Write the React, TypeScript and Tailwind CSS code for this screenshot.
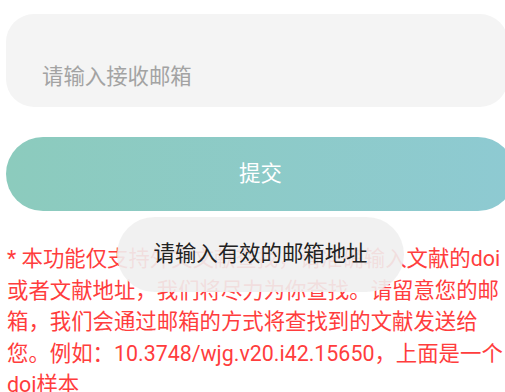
import React from "react";

export default function App() {
  const font = { fontFamily: 'Roboto, "Noto Sans CJK SC", sans-serif' };
  return (
    <div className="relative h-[392px] w-[505px] overflow-hidden bg-white" style={font}>
      <div className="pt-[14px] pl-[6px]">
        <div className="h-[93px] w-[502px] rounded-[28px] bg-[#f4f4f4] pl-[36px] pt-[47px] text-[21.4px] leading-[32px] text-[#a3a3a3]">
          请输入接收邮箱
        </div>
        <div className="mt-[30px] flex h-[74px] w-[509px] items-center justify-center rounded-full bg-gradient-to-r from-[#8ccbbd] to-[#8ecad2] text-[21.4px] text-white">
          提交
        </div>
      </div>
      <p className="mt-[32px] w-[505px] pl-[7px] text-[21.4px] leading-[31.6px] text-[#ff3d3d]">
        * 本功能仅支持外文文献查找，请准确输入文献的doi或者文献地址，我们将尽力为你查找。请留意您的邮箱，我们会通过邮箱的方式将查找到的文献发送给您。例如：10.3748/wjg.v20.i42.15650，上面是一个doi样本
      </p>
      <div className="absolute left-[117px] top-[217px] flex h-[75px] w-[287px] items-center justify-center rounded-full bg-[#efefef]/90 text-[21.4px] text-[#222222]">
        请输入有效的邮箱地址
      </div>
    </div>
  );
}
